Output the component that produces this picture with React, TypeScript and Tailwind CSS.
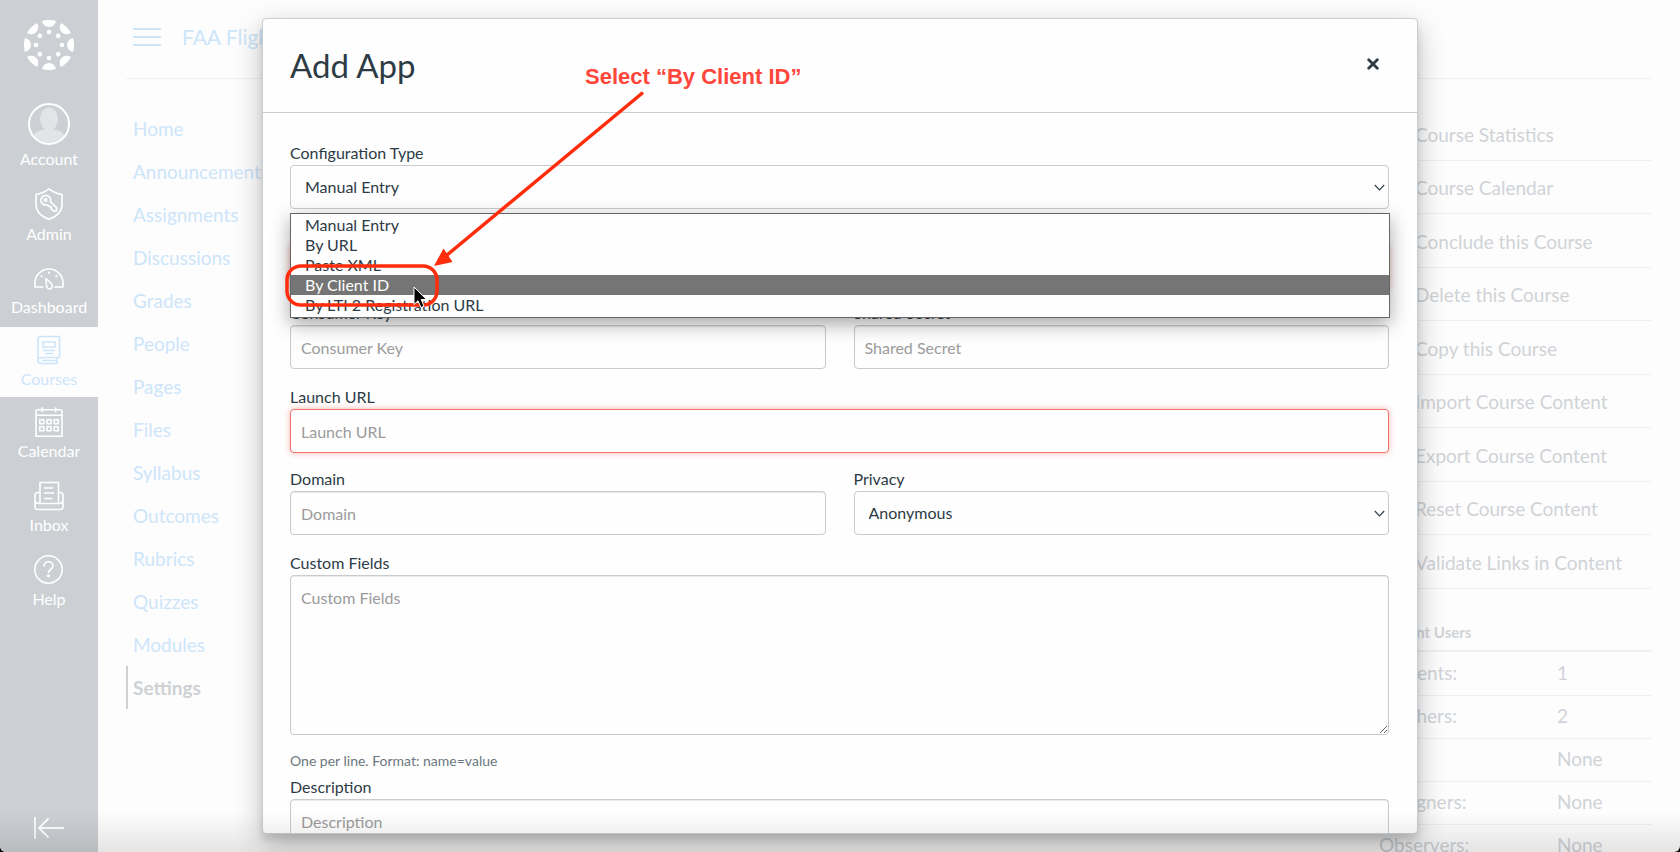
import { useState } from "react";
import type { ReactNode } from "react";

const courseLinks = [
  "Home",
  "Announcements",
  "Assignments",
  "Discussions",
  "Grades",
  "People",
  "Pages",
  "Files",
  "Syllabus",
  "Outcomes",
  "Rubrics",
  "Quizzes",
  "Modules",
  "Settings",
];

const courseActions = [
  "Course Statistics",
  "Course Calendar",
  "Conclude this Course",
  "Delete this Course",
  "Copy this Course",
  "Import Course Content",
  "Export Course Content",
  "Reset Course Content",
  "Validate Links in Content",
];

const currentUsers = [
  { role: "Students:", count: "1" },
  { role: "Teachers:", count: "2" },
  { role: "TAs:", count: "None" },
  { role: "Designers:", count: "None" },
  { role: "Observers:", count: "None" },
];

const configTypes = [
  "Manual Entry",
  "By URL",
  "Paste XML",
  "By Client ID",
  "By LTI 2 Registration URL",
];

function CanvasLogo() {
  return (
    <svg width="50" height="50" viewBox="-25 -25 50 50" fill="currentColor">
      {[0, 45, 90, 135, 180, 225, 270, 315].map((angle) => (
        <g key={angle} transform={`rotate(${angle})`}>
          <path d="M-7 -24A25 25 0 0 1 7 -24A7.1 7.1 0 0 1 -7 -24Z" />
          <circle cx="0" cy="-13" r="2.3" />
        </g>
      ))}
    </svg>
  );
}

function AvatarIcon() {
  return (
    <svg width="42" height="42" viewBox="0 0 42 42">
      <defs>
        <clipPath id="avatar-clip">
          <circle cx="21" cy="21" r="20" />
        </clipPath>
      </defs>
      <g clipPath="url(#avatar-clip)" fill="#e3e4e5">
        <ellipse cx="21" cy="16" rx="9" ry="11.5" />
        <path d="M3 42C3 32 8 27 17 26.5H25C34 27 39 32 39 42Z" />
      </g>
      <circle cx="21" cy="21" r="20" fill="none" stroke="#fff" strokeWidth="2" />
    </svg>
  );
}

function AdminIcon() {
  return (
    <svg width="28" height="32" viewBox="0 0 28 32" fill="none" stroke="currentColor" strokeWidth="1.6" strokeLinejoin="round">
      <path d="M14 .9C17.5 3.6 22 5.7 27 6.5V16.5C27 23.5 21.5 28.5 14 31.2C6.5 28.5 1 23.5 1 16.5V6.5C6 5.7 10.5 3.6 14 .9Z" />
      <path d="M14.2 8.8C12 6.8 8.6 7 6.9 9.2C5.2 11.5 5.6 14.4 7.8 16C9.1 17 10.8 17.2 12.2 16.7L14 18.4L16 18.8L16.4 21L18.4 23H21.6V19.8L15.4 13.6C16 11.9 15.5 10 14.2 8.8Z" />
      <circle cx="10.6" cy="12" r="1.3" />
    </svg>
  );
}

function DashboardIcon() {
  return (
    <svg width="30" height="30" viewBox="0 0 30 30" fill="none" stroke="currentColor" strokeWidth="1.6" strokeLinecap="round" strokeLinejoin="round">
      <path d="M9 24H1V20C1 12.3 7.3 6 15 6S29 12.3 29 20V24H21" />
      <path d="M11.8 15.6C14 17.5 18.5 20.5 18.3 23.3C18.2 25 17 25.9 15.7 25.9C13.8 25.9 12.7 24.5 12.5 22.5Z" />
      <path d="M15 9.5V10M7.4 13L7.8 13.3M22.6 13L22.2 13.3" strokeWidth="2" />
    </svg>
  );
}

function CoursesIcon() {
  return (
    <svg width="24" height="30" viewBox="0 0 24 30" fill="none" stroke="currentColor" strokeWidth="1.6" strokeLinejoin="round">
      <path d="M22.5 22.5H4.5C2.5 22.5 1 23.8 1 25.5S2.5 28.5 4.5 28.5H21M1 25.5V4.5C1 2.5 2.3 1.5 4.5 1.5H22.5V22.5M20 22.5V28.5" />
      <path d="M6 7H18V12H6ZM6 15.5H18M8 18.5H16M5 25.5H19.5" />
    </svg>
  );
}

function CalendarIcon() {
  return (
    <svg width="28" height="30" viewBox="0 0 28 30" fill="none" stroke="currentColor" strokeWidth="1.6" strokeLinejoin="round">
      <path d="M1 29.2V4.5C1 3.5 1.7 2.8 2.7 2.8H25.3C26.3 2.8 27 3.5 27 4.5V29.2ZM1 8.3H27M7.3 .2V5.2M20.7 .2V5.2" />
      <path d="M4.8 12.7H8.8V16.7H4.8ZM12 12.7H16V16.7H12ZM19.2 12.7H23.2V16.7H19.2ZM4.8 19.8H8.8V23.8H4.8ZM12 19.8H16V23.8H12ZM19.2 19.8H23.2V23.8H19.2Z" />
    </svg>
  );
}

function InboxIcon() {
  return (
    <svg width="30" height="30" viewBox="0 0 30 30" fill="none" stroke="currentColor" strokeWidth="1.6" strokeLinejoin="round">
      <path d="M6 22.5V1.5H24.5V22.5" />
      <path d="M6 11.5H4C2.3 11.5 1 12.8 1 14.5V26C1 27.5 2 28.5 3.5 28.5H26.5C28 28.5 29 27.5 29 26V14.5C29 12.8 27.7 11.5 26 11.5H24.5M1 18.5C1 21.5 2.8 22.5 5 22.5H25C27.2 22.5 29 21.5 29 18.5" />
      <path d="M10 7H19M10 12H20M10 17.5H18.5" />
    </svg>
  );
}

function HelpIcon() {
  return (
    <svg width="30" height="30" viewBox="0 0 30 30" fill="none" stroke="currentColor" strokeWidth="1.6">
      <circle cx="14.5" cy="14.5" r="13.7" />
      <path d="M10 11.5C10 8.5 12 6.8 14.5 6.8S19 8.5 19 11C19 14.5 14.5 14 14.5 18" />
      <circle cx="14.5" cy="20.8" r="1.6" fill="currentColor" stroke="none" />
    </svg>
  );
}

interface NavItemProps {
  label: string;
  icon: ReactNode;
  active?: boolean;
  tall?: boolean;
}

function NavItem({ label, icon, active, tall }: NavItemProps) {
  const height = tall ? "h-[86px]" : active ? "h-[70px]" : "h-[74px]";
  return (
    <a
      href="#"
      className={`flex ${height} flex-col items-center justify-center gap-1 text-base leading-5 ${
        active ? "bg-[#fdfdfe] text-[#cde5f9]" : "text-white"
      }`}
    >
      {icon}
      <span>{label}</span>
    </a>
  );
}

function GlobalNav() {
  return (
    <nav className="flex w-[98px] shrink-0 flex-col bg-[#ccd0d4] text-white">
      <a href="#" aria-label="Canvas" className="flex h-[93px] items-center justify-center pb-1">
        <CanvasLogo />
      </a>
      <NavItem label="Account" icon={<AvatarIcon />} tall />
      <NavItem label="Admin" icon={<AdminIcon />} />
      <NavItem label="Dashboard" icon={<DashboardIcon />} />
      <NavItem label="Courses" icon={<CoursesIcon />} active />
      <NavItem label="Calendar" icon={<CalendarIcon />} />
      <NavItem label="Inbox" icon={<InboxIcon />} />
      <NavItem label="Help" icon={<HelpIcon />} />
      <button type="button" aria-label="Minimize navigation" className="mt-auto flex h-12 items-center justify-center">
        <svg width="30" height="22" viewBox="0 0 30 22" fill="none" stroke="currentColor" strokeWidth="1.8" strokeLinecap="round" strokeLinejoin="round">
          <path d="M1 1V21M29.2 11H5M14 2L5 11L14 20" />
        </svg>
      </button>
    </nav>
  );
}

function CoursePage() {
  return (
    <div className="mx-7 flex min-w-0 flex-1 flex-col">
      <header className="flex h-[79px] shrink-0 items-center gap-[21px] border-b border-[#f0f0f1] pl-[7px] pb-1 text-[#cde5f9]">
        <button type="button" aria-label="Toggle course menu" className="flex flex-col gap-1.5">
          <span className="h-0.5 w-7 bg-current" />
          <span className="h-0.5 w-7 bg-current" />
          <span className="h-0.5 w-7 bg-current" />
        </button>
        <a href="#" className="text-[21px]">FAA Flight</a>
      </header>
      <div className="flex justify-between pt-7 text-[19px] leading-6">
        <nav className="flex flex-col">
          {courseLinks.map((link) => (
            <a
              key={link}
              href="#"
              className={`flex h-[43px] items-center border-l-2 pt-px pl-[5px] ${
                link === "Settings"
                  ? "border-[#cdd1d4] font-bold text-[#cdd1d4]"
                  : "border-transparent text-[#cde5f9]"
              }`}
            >
              {link}
            </a>
          ))}
        </nav>
        <aside className="w-[273px] shrink-0 text-[#d0d3d6]">
          <div className="flex flex-col">
            {courseActions.map((action) => (
              <a
                key={action}
                href="#"
                className="flex items-center border-b border-[#f0f0f1] pt-0.5 pl-9 odd:h-[54px] even:h-[53px]"
              >
                {action}
              </a>
            ))}
          </div>
          <h2 className="mt-8 border-b-2 border-[#f0f0f1] pb-[7px] text-[15px] leading-[22px] font-bold">
            Current Users
          </h2>
          <table className="w-full text-left">
            <tbody>
              {currentUsers.map((row) => (
                <tr key={row.role} className="h-[43px] border-b border-[#f0f0f1]">
                  <th scope="row" className="w-[178px] p-0 pb-px font-normal">{row.role}</th>
                  <td className="p-0 pb-px">{row.count}</td>
                </tr>
              ))}
            </tbody>
          </table>
        </aside>
      </div>
    </div>
  );
}

interface FieldProps {
  id: string;
  label: string;
  children: ReactNode;
}

function Field({ id, label, children }: FieldProps) {
  return (
    <div className="relative flex flex-1 flex-col">
      <label htmlFor={id} className="leading-6">{label}</label>
      {children}
    </div>
  );
}

function TextInput({ id, invalid }: { id: string; invalid?: boolean }) {
  return (
    <input
      id={id}
      type="text"
      placeholder={id}
      className={`h-11 w-full rounded border bg-[#fefefe] px-2.5 outline-none placeholder:text-[#9b9b9b] ${
        invalid
          ? "border-[#f0746e] shadow-[0_0_6px_#f8b5b1]"
          : "border-[#c9cbcd] shadow-[inset_0_1px_1px_#e8e8e8]"
      }`}
    />
  );
}

function SelectInput({ id, options }: { id: string; options: string[] }) {
  return (
    <div className="relative">
      <select
        id={id}
        className="h-11 w-full appearance-none rounded border border-[#c9cbcd] bg-[#fefefe] pr-8 pl-[14px] outline-none"
      >
        {options.map((option) => (
          <option key={option}>{option}</option>
        ))}
      </select>
      <svg
        className="pointer-events-none absolute top-[19px] right-1"
        width="11"
        height="8"
        viewBox="0 0 11 8"
        fill="none"
        stroke="#2d3b45"
        strokeWidth="1.1"
      >
        <path d="M.8 1L5.5 6L10.2 1" />
      </svg>
    </div>
  );
}

function ConfigTypeMenu({ highlighted, onHighlight }: { highlighted: string; onHighlight: (type: string) => void }) {
  return (
    <ul
      role="listbox"
      aria-label="Configuration Type options"
      className="absolute -right-px left-0 top-full z-10 mt-1 border border-[#666] bg-[#fefefe] pt-px pb-0.5 shadow-[0_6px_18px_rgba(0,0,0,0.35)]"
    >
      {configTypes.map((type) => (
        <li
          key={type}
          role="option"
          aria-selected={type === highlighted}
          onMouseEnter={() => onHighlight(type)}
          className={`px-[14px] leading-5 ${type === highlighted ? "bg-[#757575] text-white" : ""}`}
        >
          {type}
        </li>
      ))}
    </ul>
  );
}

function Callout() {
  return (
    <div className="pointer-events-none absolute inset-0 z-20">
      <p className="absolute top-[44px] left-[322px] font-[Liberation_Sans,Arial,sans-serif] text-[22px] leading-7 font-bold text-[#ff463b]">
        Select “By Client ID”
      </p>
      <svg className="absolute inset-0 h-full w-full" fill="none">
        <rect x="24" y="247" width="150" height="39" rx="14" stroke="#ff2d0c" strokeWidth="3.5" />
        <path d="M380 73.5L184 236" stroke="#ff2d0c" strokeWidth="3.5" />
        <path d="M171 247L180.5 229.5L189.5 243Z" fill="#ff2d0c" />
        <path
          d="M151 268V285.5L155 281.7L158 288.5L161 287.2L158.2 280.5H163.5Z"
          fill="#000"
          stroke="#fff"
          strokeWidth="1"
        />
      </svg>
    </div>
  );
}

function AddAppDialog() {
  const [highlighted, setHighlighted] = useState("By Client ID");

  return (
    <div className="absolute inset-0 flex justify-center pt-[18px] pb-[18px]">
      <div
        role="dialog"
        aria-label="Add App"
        className="relative flex w-full max-w-[1156px] flex-col rounded border border-[#c7cdd1] bg-[#fefefe] text-[#2d3b45] shadow-[0_6px_7px_rgba(0,0,0,0.1),0_10px_28px_rgba(0,0,0,0.25)]"
      >
        <header className="flex h-[94px] shrink-0 items-center justify-between border-b border-[#c7cdd1] pr-7 pb-0.5 pl-[27px]">
          <h1 className="text-[33px] leading-10">Add App</h1>
          <button type="button" aria-label="Close" className="flex size-8 items-center justify-center pb-0.5">
            <svg width="12" height="12" viewBox="0 0 12 12" stroke="currentColor" strokeWidth="2.8" strokeLinecap="round">
              <path d="M1.7 1.7L10.3 10.3M10.3 1.7L1.7 10.3" />
            </svg>
          </button>
        </header>
        <form className="min-h-0 flex-1 overflow-hidden pt-7 pr-7 pl-[27px]">
          <Field id="Configuration Type" label="Configuration Type">
            <SelectInput id="Configuration Type" options={configTypes} />
            <ConfigTypeMenu highlighted={highlighted} onHighlight={setHighlighted} />
          </Field>
          <div className="mt-3">
            <Field id="Name" label="Name">
              <TextInput id="Name" invalid />
            </Field>
          </div>
          <div className="mt-3 flex gap-7">
            <Field id="Consumer Key" label="Consumer Key">
              <TextInput id="Consumer Key" />
            </Field>
            <Field id="Shared Secret" label="Shared Secret">
              <TextInput id="Shared Secret" />
            </Field>
          </div>
          <div className="mt-4">
            <Field id="Launch URL" label="Launch URL">
              <TextInput id="Launch URL" invalid />
            </Field>
          </div>
          <div className="mt-3.5 flex gap-7">
            <Field id="Domain" label="Domain">
              <TextInput id="Domain" />
            </Field>
            <Field id="Privacy" label="Privacy">
              <SelectInput id="Privacy" options={["Anonymous"]} />
            </Field>
          </div>
          <div className="mt-4">
            <Field id="Custom Fields" label="Custom Fields">
              <textarea
                id="Custom Fields"
                placeholder="Custom Fields"
                className="h-40 w-full resize rounded border border-[#c9cbcd] bg-[#fefefe] px-2.5 py-2.5 leading-6 shadow-[inset_0_1px_1px_#e8e8e8] outline-none placeholder:text-[#9b9b9b]"
              />
              <p className="mt-4 mb-1 text-sm leading-5 text-[#6b7780]">One per line. Format: name=value</p>
            </Field>
          </div>
          <Field id="Description" label="Description">
            <TextInput id="Description" />
          </Field>
        </form>
        <Callout />
      </div>
    </div>
  );
}

export default function App() {
  return (
    <div className="h-screen bg-black font-[Lato,sans-serif]">
      <div className="relative flex h-full overflow-hidden rounded-b-md bg-[#fdfdfe]">
        <GlobalNav />
        <CoursePage />
        <AddAppDialog />
        <div className="pointer-events-none absolute inset-x-0 bottom-0 z-30 h-10 bg-linear-to-t from-black/10 to-transparent" />
      </div>
    </div>
  );
}
